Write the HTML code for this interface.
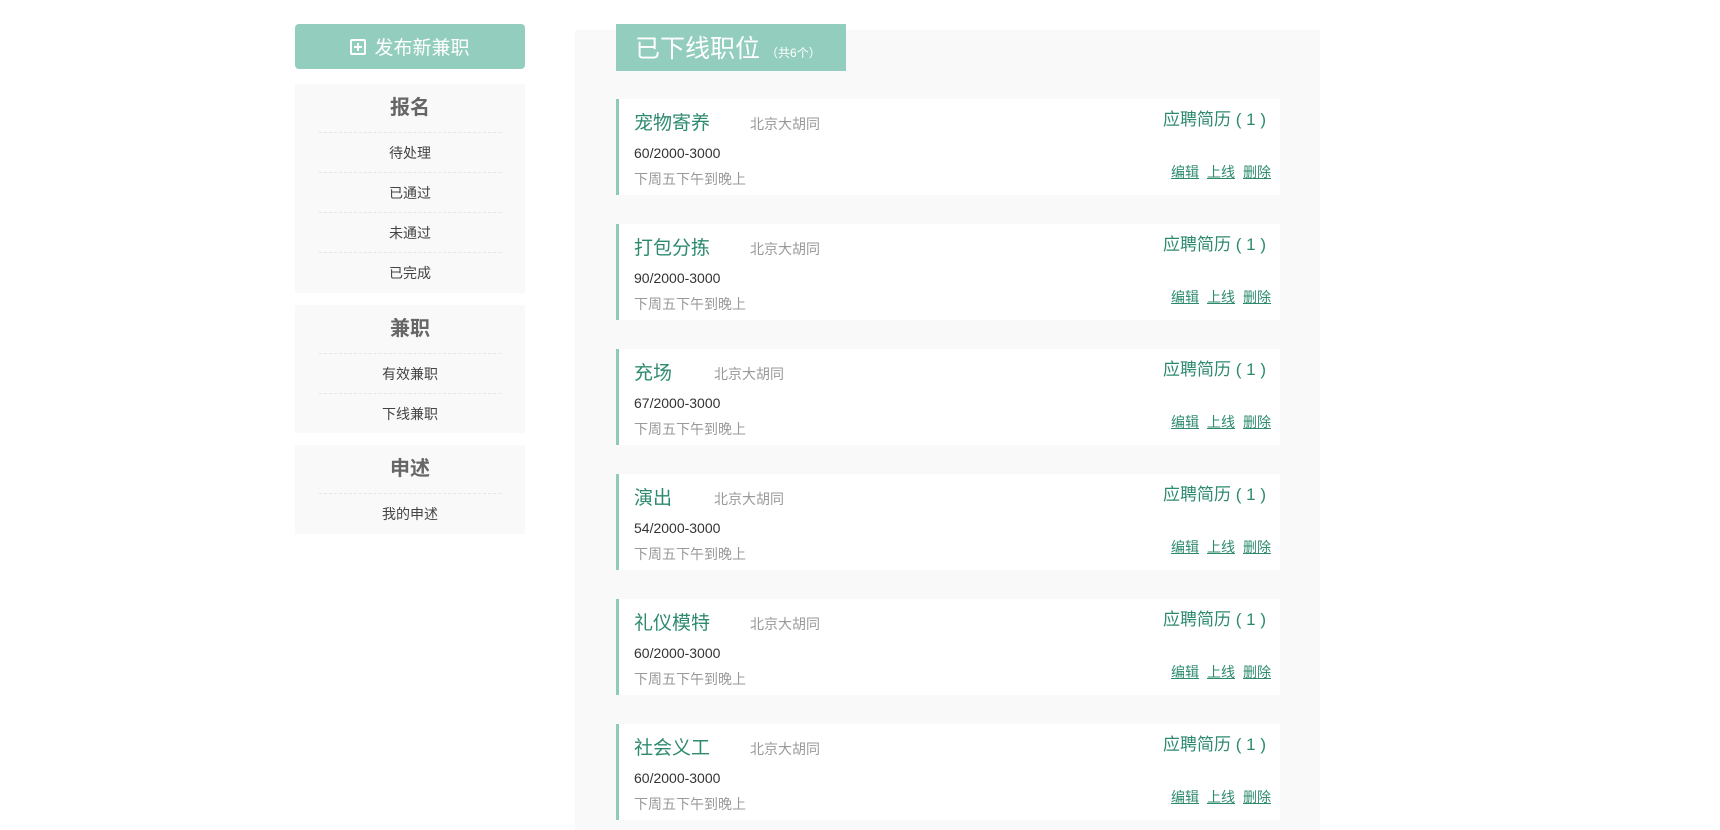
<!DOCTYPE html>
<html><head><meta charset="utf-8"><style>
*{margin:0;padding:0;box-sizing:border-box}
body{width:1720px;height:805px;overflow:hidden;background:#fff;font-family:"Liberation Sans","Noto Sans CJK SC",sans-serif;position:relative}
.btn{position:absolute;left:295px;top:24px;width:230px;height:45px;background:#92cdbd;border-radius:4px;color:#fff;font-size:19px;display:flex;align-items:center;justify-content:center;gap:8px}
.btn i{display:inline-block;width:16px;height:16px;border:2px solid #fff;border-radius:2px;position:relative}
.btn i:before{content:"";position:absolute;left:2px;top:5px;width:8px;height:2px;background:#fff}
.btn i:after{content:"";position:absolute;left:5px;top:2px;width:2px;height:8px;background:#fff}
.box{position:absolute;left:295px;width:230px;background:#f9f9f9}
.box h3{height:48px;line-height:48px;text-align:center;font-size:20px;color:#666;font-weight:bold}
.box div{margin:0 24px;border-top:1px dashed #e6e6e6;height:40px;line-height:40px;text-align:center;font-size:14px;color:#444}
.panel{position:absolute;left:575px;top:30px;width:745px;height:800px;background:#f9f9f9}
.tab{position:absolute;left:616px;top:24px;width:230px;height:47px;background:#92cdbd;color:#fff;font-size:25px;line-height:50px;padding-left:19px}
.tab small{font-size:12px;margin-left:6px}
.card{position:absolute;left:616px;width:664px;height:96px;background:#fff;border-left:3px solid #8fcbb9}
.t{position:absolute;left:15px;top:9px;font-size:19px;color:#2e8a6f}
.loc{position:absolute;top:15px;font-size:14px;color:#999}
.sal{position:absolute;left:15px;top:46px;font-size:14px;color:#333}
.time{position:absolute;left:15px;top:70px;font-size:14px;color:#999}
.cv{position:absolute;right:14px;top:6px;font-size:17px;color:#2e8a6f}
.lk{position:absolute;right:9px;top:63px;font-size:14px;color:#2e8a6f}
.lk span{text-decoration:underline;margin-left:8px}
</style></head><body>
<div class="btn"><i></i>发布新兼职</div>
<div class="box" style="top:84px;height:209px"><h3>报名</h3><div>待处理</div><div>已通过</div><div>未通过</div><div>已完成</div></div>
<div class="box" style="top:305px;height:128px"><h3>兼职</h3><div>有效兼职</div><div>下线兼职</div></div>
<div class="box" style="top:445px;height:89px"><h3>申述</h3><div>我的申述</div></div>
<div class="panel"></div>
<div class="tab">已下线职位<small>（共6个）</small></div>

<div class="card" style="top:99px"><div class="t">宠物寄养</div><div class="loc" style="left:131px">北京大胡同</div><div class="sal">60/2000-3000</div><div class="time">下周五下午到晚上</div><div class="cv">应聘简历 ( 1 )</div><div class="lk"><span>编辑</span><span>上线</span><span>删除</span></div></div>
<div class="card" style="top:224px"><div class="t">打包分拣</div><div class="loc" style="left:131px">北京大胡同</div><div class="sal">90/2000-3000</div><div class="time">下周五下午到晚上</div><div class="cv">应聘简历 ( 1 )</div><div class="lk"><span>编辑</span><span>上线</span><span>删除</span></div></div>
<div class="card" style="top:349px"><div class="t">充场</div><div class="loc" style="left:95px">北京大胡同</div><div class="sal">67/2000-3000</div><div class="time">下周五下午到晚上</div><div class="cv">应聘简历 ( 1 )</div><div class="lk"><span>编辑</span><span>上线</span><span>删除</span></div></div>
<div class="card" style="top:474px"><div class="t">演出</div><div class="loc" style="left:95px">北京大胡同</div><div class="sal">54/2000-3000</div><div class="time">下周五下午到晚上</div><div class="cv">应聘简历 ( 1 )</div><div class="lk"><span>编辑</span><span>上线</span><span>删除</span></div></div>
<div class="card" style="top:599px"><div class="t">礼仪模特</div><div class="loc" style="left:131px">北京大胡同</div><div class="sal">60/2000-3000</div><div class="time">下周五下午到晚上</div><div class="cv">应聘简历 ( 1 )</div><div class="lk"><span>编辑</span><span>上线</span><span>删除</span></div></div>
<div class="card" style="top:724px"><div class="t">社会义工</div><div class="loc" style="left:131px">北京大胡同</div><div class="sal">60/2000-3000</div><div class="time">下周五下午到晚上</div><div class="cv">应聘简历 ( 1 )</div><div class="lk"><span>编辑</span><span>上线</span><span>删除</span></div></div>
</body></html>
